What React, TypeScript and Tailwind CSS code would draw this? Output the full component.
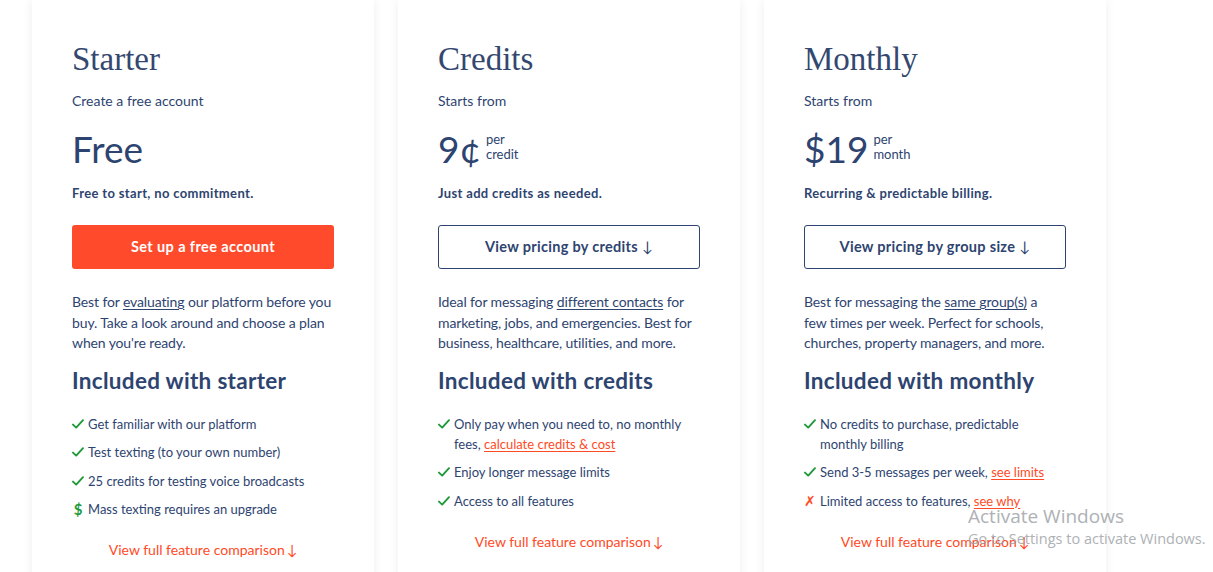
import React from "react";

type Feature = {
	icon: "check" | "dollar" | "cross";
	text: React.ReactNode;
};

type Plan = {
	name: string;
	from: string;
	price: string;
	unit?: [string, string];
	tagline: string;
	cta: string;
	primary?: boolean;
	blurb: React.ReactNode;
	heading: string;
	features: Feature[];
};

function OrangeLink({ children }: { children: React.ReactNode }) {
	return <span className="text-[#ff4a26] underline underline-offset-2">{children}</span>;
}

function NavyLink({ children }: { children: React.ReactNode }) {
	return <span className="underline underline-offset-2">{children}</span>;
}

const plans: Plan[] = [
	{
		name: "Starter",
		from: "Create a free account",
		price: "Free",
		tagline: "Free to start, no commitment.",
		cta: "Set up a free account",
		primary: true,
		blurb: (
			<>
				Best for <NavyLink>evaluating</NavyLink> our platform before you buy. Take a look around and
				choose a plan when you're ready.
			</>
		),
		heading: "Included with starter",
		features: [
			{ icon: "check", text: "Get familiar with our platform" },
			{ icon: "check", text: "Test texting (to your own number)" },
			{ icon: "check", text: "25 credits for testing voice broadcasts" },
			{ icon: "dollar", text: "Mass texting requires an upgrade" },
		],
	},
	{
		name: "Credits",
		from: "Starts from",
		price: "9¢",
		unit: ["per", "credit"],
		tagline: "Just add credits as needed.",
		cta: "View pricing by credits",
		blurb: (
			<>
				Ideal for messaging <NavyLink>different contacts</NavyLink> for marketing, jobs, and
				emergencies. Best for business, healthcare, utilities, and more.
			</>
		),
		heading: "Included with credits",
		features: [
			{
				icon: "check",
				text: (
					<>
						Only pay when you need to, no monthly fees, <OrangeLink>calculate credits &amp; cost</OrangeLink>
					</>
				),
			},
			{ icon: "check", text: "Enjoy longer message limits" },
			{ icon: "check", text: "Access to all features" },
		],
	},
	{
		name: "Monthly",
		from: "Starts from",
		price: "$19",
		unit: ["per", "month"],
		tagline: "Recurring & predictable billing.",
		cta: "View pricing by group size",
		blurb: (
			<>
				Best for messaging the <NavyLink>same group(s)</NavyLink> a few{"\u00a0"}times per week. Perfect for
				schools, churches, property managers, and more.
			</>
		),
		heading: "Included with monthly",
		features: [
			{ icon: "check", text: "No credits to purchase, predictable monthly billing" },
			{
				icon: "check",
				text: (
					<>
						Send 3-5 messages per week, <OrangeLink>see limits</OrangeLink>
					</>
				),
			},
			{
				icon: "cross",
				text: (
					<>
						Limited access to features, <OrangeLink>see why</OrangeLink>
					</>
				),
			},
		],
	},
];

function FeatureIcon({ kind }: { kind: Feature["icon"] }) {
	if (kind === "dollar") {
		return (
			<span className="w-3 shrink-0 text-center text-[15px] font-bold leading-5 text-[#1f9a3a]">$</span>
		);
	}
	if (kind === "cross") {
		return <span className="w-3 shrink-0 text-[14px] leading-5 text-[#ff4a26]">✗</span>;
	}
	return (
		<svg viewBox="0 0 12 12" className="mt-[4px] h-3 w-3 shrink-0" aria-hidden="true">
			<path d="M1 6.6 L4.2 9.6 L11 2.2" fill="none" stroke="#1f9a3a" strokeWidth="1.9" strokeLinecap="round" strokeLinejoin="round" />
		</svg>
	);
}

function PlanCard({ plan }: { plan: Plan }) {
	return (
		<div className="w-[342px] shrink-0 bg-white px-10 pt-[40px] pb-10 shadow-[0_0_10px_rgba(0,0,0,0.07)]">
			<h2 className="font-['Liberation_Serif',serif] text-[33px] leading-[38px] text-[#34486f]">{plan.name}</h2>
			<p className="mt-[13px] text-[14px] leading-5">{plan.from}</p>

			<div className="mt-[18px] flex items-start">
				<span className="text-[37px] leading-10">{plan.price}</span>
				{plan.unit && (
					<span className="ml-[5px] mt-[3px] flex flex-col text-[13px] leading-[15px]">
						<span>{plan.unit[0]}</span>
						<span>{plan.unit[1]}</span>
					</span>
				)}
			</div>

			<p className="mt-[15px] text-[13px] font-bold leading-[18px] tracking-[0.35px]">{plan.tagline}</p>

			{plan.primary ? (
				<button className="mt-[23px] flex h-11 w-full items-center justify-center rounded-[3px] bg-[#ff4b2b] text-[14.5px] font-bold tracking-[0.4px] text-white">
					{plan.cta}
				</button>
			) : (
				<button className="mt-[23px] flex h-11 w-full items-center justify-center rounded-[3px] border border-[#2e4470] text-[14.5px] font-bold tracking-[0.3px]">
					{plan.cta}
					<span className="ml-1 font-normal">↓</span>
				</button>
			)}

			<p className="mt-[23px] text-[14px] leading-[20.5px] tracking-[-0.12px]">{plan.blurb}</p>

			<h3 className="mt-[13px] text-[22.5px] font-bold leading-7 tracking-[0.3px]">{plan.heading}</h3>

			<ul className="mt-[19px] flex flex-col gap-[8.5px]">
				{plan.features.map((f, i) => (
					<li key={i} className="flex gap-1 text-[13px] leading-5">
						<FeatureIcon kind={f.icon} />
						<span>{f.text}</span>
					</li>
				))}
			</ul>

			<p className="mt-[21px] text-center text-[14px] leading-5 text-[#ff4a26]">
				View full feature comparison<span className="ml-0.5">↓</span>
			</p>
		</div>
	);
}

export default function App() {
	return (
		<div className="relative h-[572px] overflow-hidden bg-white font-['Lato',sans-serif] text-[#2e4470]">
			<div className="flex items-start gap-6 pl-8">
				{plans.map((p) => (
					<PlanCard key={p.name} plan={p} />
				))}
			</div>

			{/* OS watermark */}
			<div className="pointer-events-none absolute left-[968px] top-[503px] font-['Open_Sans',sans-serif] text-[#9a9ea3]">
				<p className="text-[19px] leading-[26px] opacity-80">Activate Windows</p>
				<p className="text-[14.5px] leading-5 opacity-80">Go to Settings to activate Windows.</p>
			</div>
		</div>
	);
}
